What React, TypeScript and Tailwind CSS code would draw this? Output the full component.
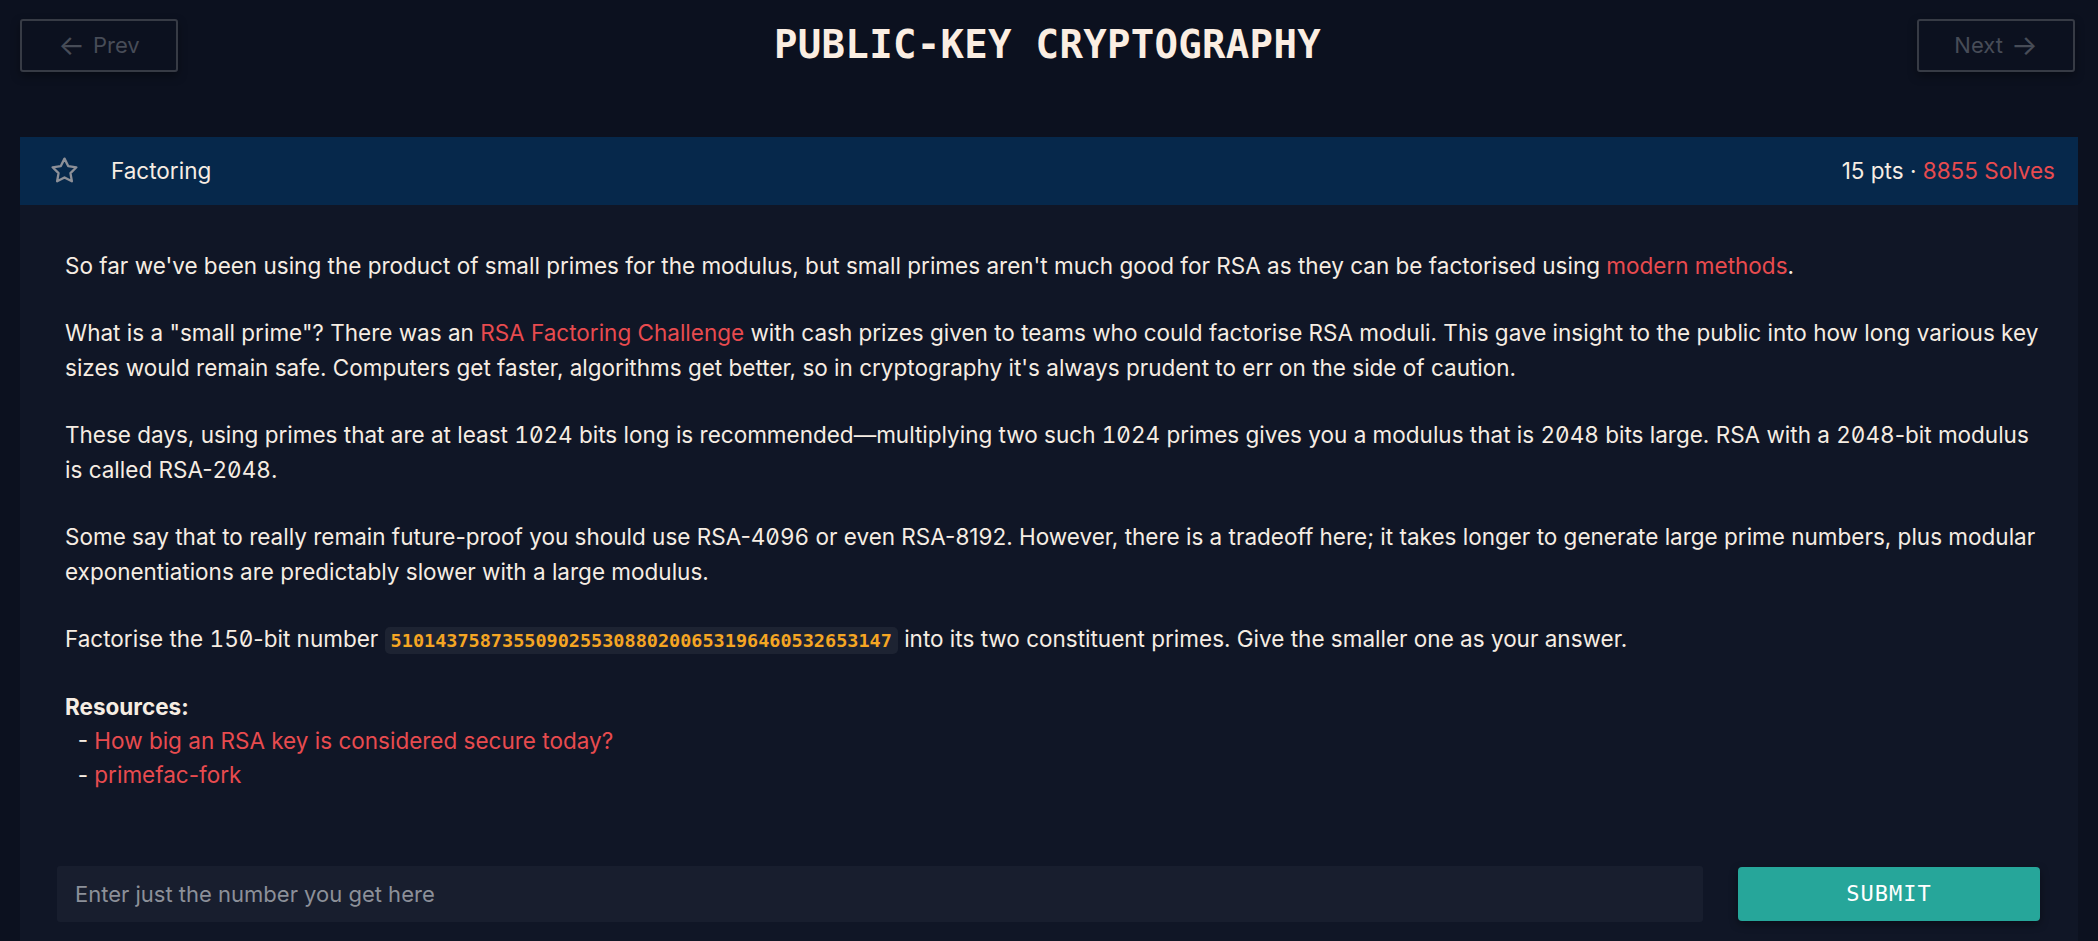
const Star = () => (
  <svg
    className="h-[31px] w-[31px]"
    viewBox="0 0 24 24"
    fill="none"
    stroke="#8d9098"
    strokeWidth={1.8}
    strokeLinejoin="round"
  >
    <path d="M12 2.8l2.85 5.78 6.38.93-4.62 4.5 1.09 6.35L12 17.36l-5.7 3 1.09-6.35-4.62-4.5 6.38-.93z" />
  </svg>
);

const Num = ({ children }: { children: string }) => (
  <span className="[font-feature-settings:'zero','tnum']">{children}</span>
);

const Link = ({ children }: { children: string }) => (
  <a href="#" className="text-[#e84b4f]">
    {children}
  </a>
);

export default function App() {
  return (
    <div className="min-h-screen bg-[#0c111f] px-[20px] pt-[16px] font-['Inter','Noto_Sans',sans-serif] text-[#f6ede3]">
      {/* nav row */}
      <div className="flex items-center justify-between">
        <button className="flex h-[53px] w-[158px] items-center justify-center gap-[8px] rounded-[3px] border-2 border-[#373b45] text-[22px] text-[#474c57] shadow-[0_4px_10px_rgba(0,0,0,0.35)]">
          <span className="text-[28px] leading-none">←</span>
          <span>Prev</span>
        </button>
        <h1 className="font-['DejaVu_Sans_Mono','Liberation_Mono',monospace] text-[39px] font-bold tracking-[0.3px] text-[#fbeee2]">
          PUBLIC-KEY CRYPTOGRAPHY
        </h1>
        <button className="mr-[3px] flex h-[53px] w-[158px] items-center justify-center gap-[8px] rounded-[3px] border-2 border-[#373b45] text-[22px] text-[#474c57] shadow-[0_4px_10px_rgba(0,0,0,0.35)]">
          <span>Next</span>
          <span className="text-[28px] leading-none">→</span>
        </button>
      </div>

      {/* challenge card */}
      <div className="mt-[62px] bg-[#101626] pb-[40px]">
        <div className="flex h-[68px] items-center justify-between bg-[#06284b] pl-[29px] pr-[23px] text-[22.5px]">
          <div className="flex items-center gap-[31px]">
            <Star />
            <span>Factoring</span>
          </div>
          <div>
            15 pts · <span className="text-[#e84b4f]">8855 Solves</span>
          </div>
        </div>

        <div className="pl-[45px] pr-[38px] pt-[43px] text-[22.5px] leading-[35px]">
          <p className="mb-[32px]">
            So far we've been using the product of small primes for the modulus, but small primes aren't much good
            for RSA as they can be factorised using <Link>modern methods</Link>.
          </p>
          <p className="mb-[32px]">
            What is a "small prime"? There was an <Link>RSA Factoring Challenge</Link> with cash prizes given to
            teams who could factorise RSA moduli. This gave insight to the public into how long various key sizes
            would remain safe. Computers get faster, algorithms get better, so in cryptography it's always prudent to
            err on the side of caution.
          </p>
          <p className="mb-[32px]">
            These days, using primes that are at least <Num>1024</Num> bits long is recommended—multiplying two such{" "}
            <Num>1024</Num> primes gives you a modulus that is <Num>2048</Num> bits large. RSA with a{" "}
            <Num>2048</Num>-bit modulus is called RSA-<Num>2048</Num>.
          </p>
          <p className="mb-[32px]">
            Some say that to really remain future-proof you should use RSA-<Num>4096</Num> or even RSA-8192. However,
            there is a tradeoff here; it takes longer to generate large prime numbers, plus modular exponentiations
            are predictably slower with a large modulus.
          </p>
          <p className="mb-[32px]">
            Factorise the <Num>150</Num>-bit number{" "}
            <code className="rounded-[5px] bg-[#1d2332] px-[6px] py-[3px] font-['DejaVu_Sans_Mono','Liberation_Mono',monospace] text-[18.5px] font-bold text-[#f5a623]">
              510143758735509025530880200653196460532653147
            </code>{" "}
            into its two constituent primes. Give the smaller one as your answer.
          </p>
          <div className="leading-[34px]">
            <div className="font-bold">Resources:</div>
            <div className="whitespace-pre">
              {"  - "}
              <Link>How big an RSA key is considered secure today?</Link>
            </div>
            <div className="whitespace-pre">
              {"  - "}
              <Link>primefac-fork</Link>
            </div>
          </div>
        </div>

        <form className="mt-[74px] flex items-center gap-[35px] pl-[37px] pr-[38px]" onSubmit={(e) => e.preventDefault()}>
          <input
            className="h-[56px] flex-1 rounded-[3px] bg-[#181e2e] px-[18px] text-[22px] text-[#f6ede3] outline-none placeholder:text-[#8c9099]"
            placeholder="Enter just the number you get here"
          />
          <button
            type="submit"
            className="h-[54px] w-[302px] rounded-[4px] bg-[#26a69a] font-['DejaVu_Sans_Mono','Liberation_Mono',monospace] text-[22px] tracking-[1px] text-white shadow-[0_3px_8px_rgba(0,0,0,0.4)]"
          >
            SUBMIT
          </button>
        </form>
      </div>
    </div>
  );
}
